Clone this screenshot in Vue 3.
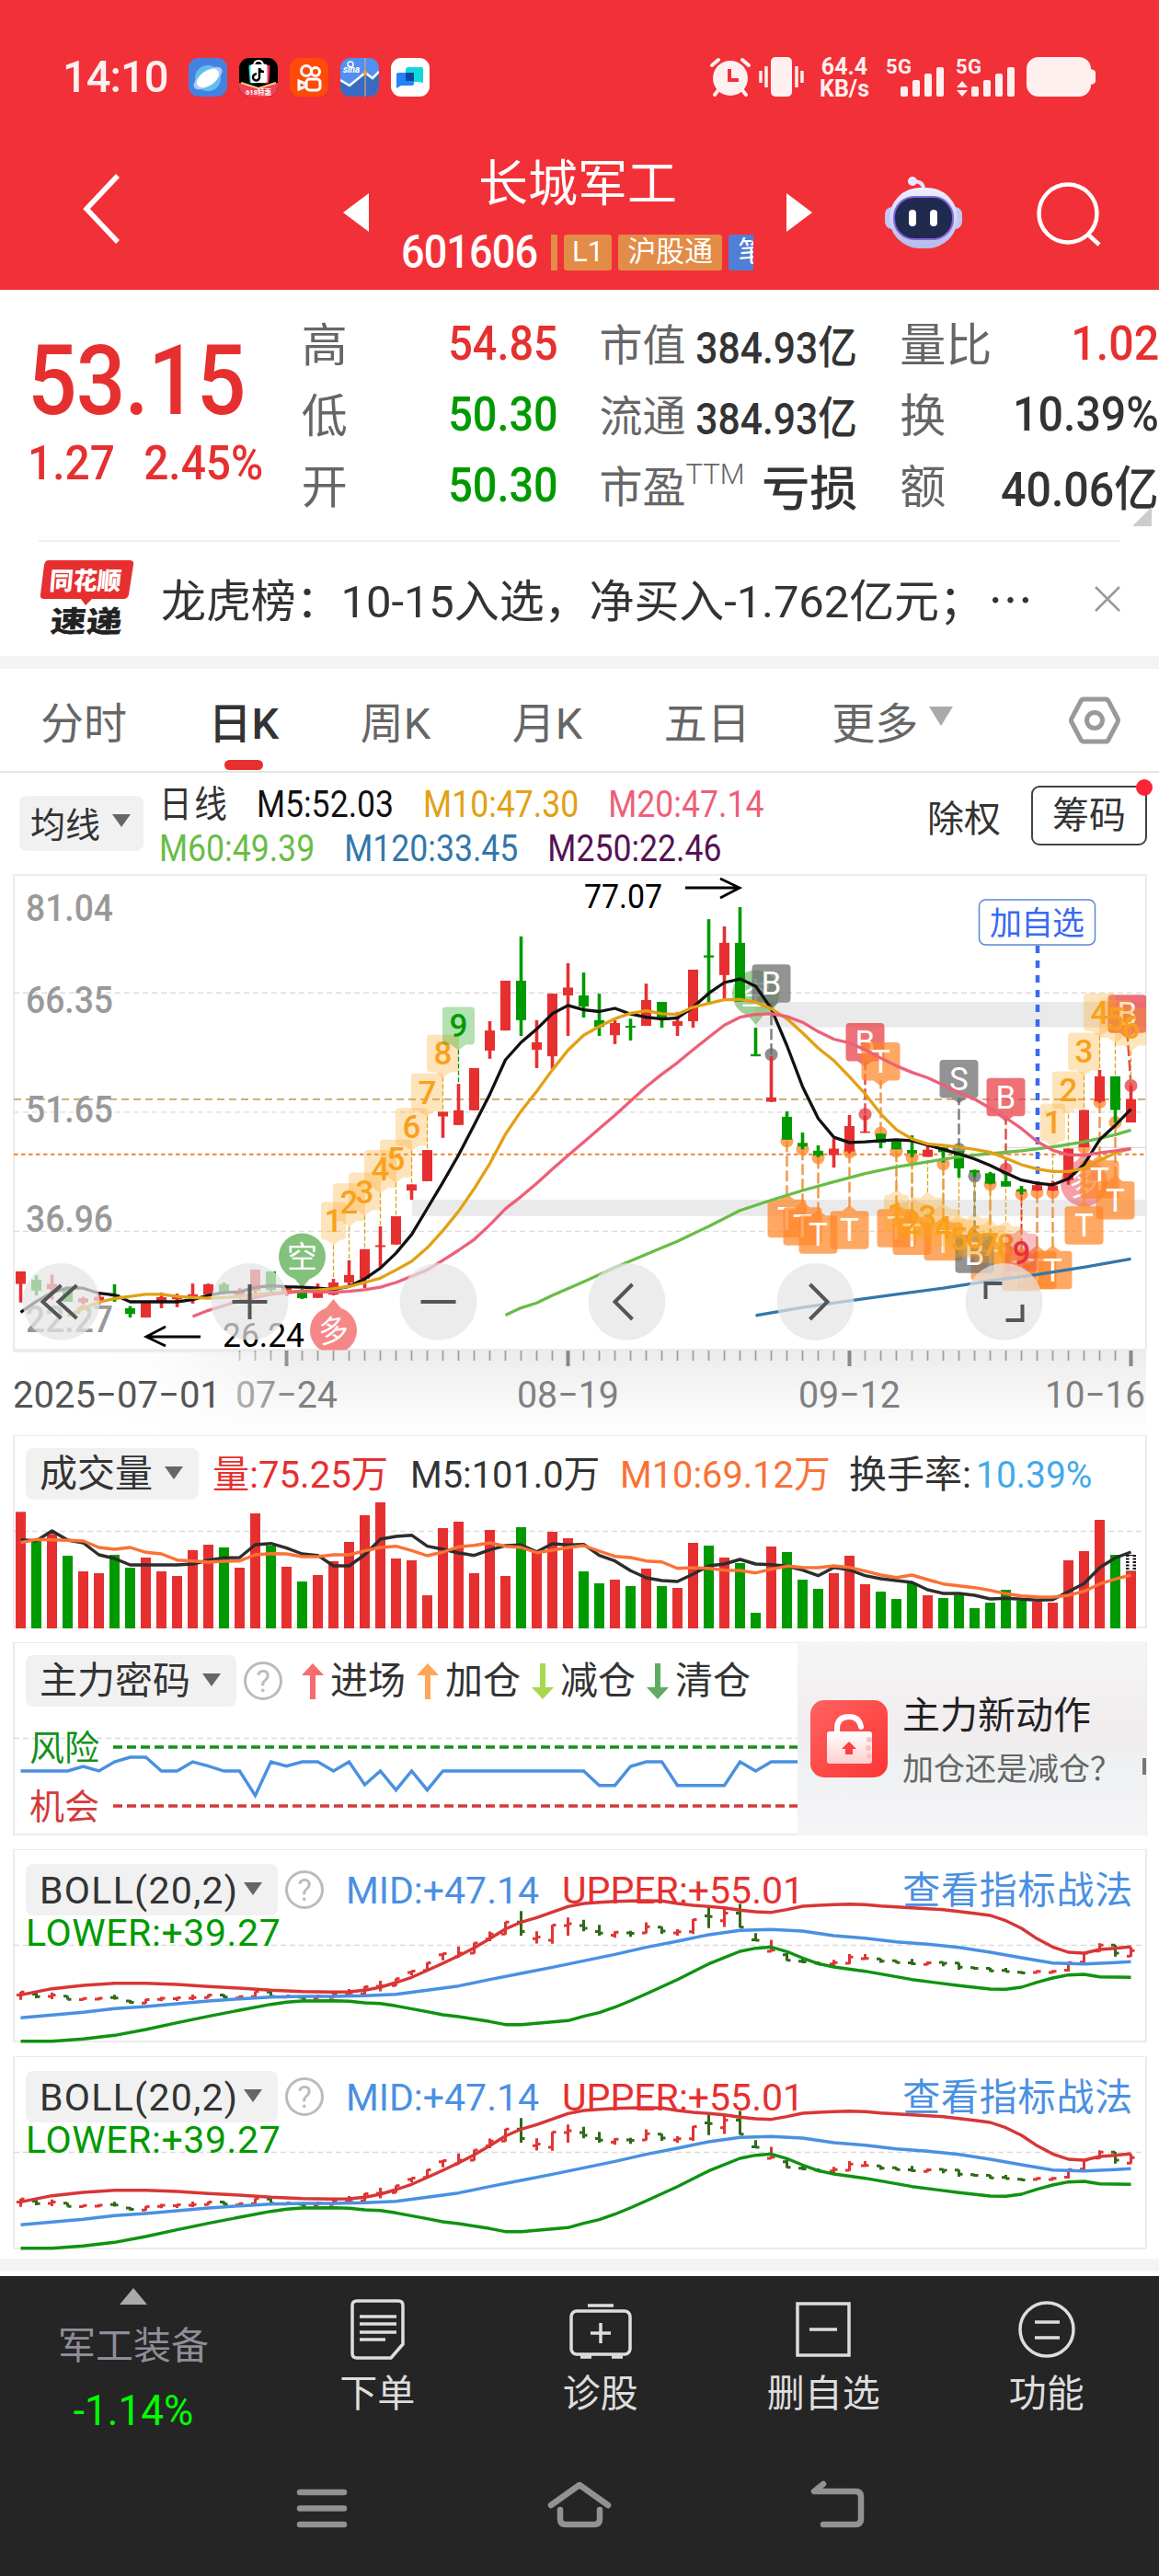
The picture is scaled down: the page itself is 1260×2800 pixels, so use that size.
<template>
  <main class="app">
    <header class="header">
      <div class="status">
        <span class="time">14:10</span>
        <div class="apps">
          <svg viewBox="0 0 42 42"><rect width="42" height="42" rx="11" fill="#4482e2"/><circle cx="21" cy="22" r="14" fill="#60c0ec"/><ellipse cx="21" cy="22" rx="18" ry="8" fill="#a8cdf5" transform="rotate(-35 21 22)"/><ellipse cx="21" cy="22" rx="13.500" ry="8" fill="#fff" transform="rotate(-35 21 22)"/></svg>
          <svg viewBox="0 0 42 42"><rect width="42" height="42" rx="11" fill="#000"/><path d="M0 27L21 33L42 27V31A11 11 0 0 1 31 42H11A11 11 0 0 1 0 31Z" fill="#ef4358"/><path d="M2 27L21 33L40 27" stroke="#f5cf76" stroke-width="2" fill="none"/><rect x="11" y="7" width="20" height="20" rx="2" fill="#25f0ea" transform="rotate(-4 21 17)"/><rect x="13" y="7" width="20" height="20" rx="2" fill="#fb3358" transform="rotate(4 21 17)"/><rect x="12.500" y="7" width="18" height="20" rx="2" fill="#fff"/><path d="M16 9q0-6 5-6t5 6" stroke="#fff" stroke-width="2" fill="none"/><path d="M22 11v10a3.500 3.500 0 1 1-3-3.500M22 11q1 4 5 4" stroke="#000" stroke-width="2.500" fill="none"/><text x="21" y="40" font-size="7.500" font-weight="700" fill="#fff" text-anchor="middle">618特惠</text></svg>
          <svg viewBox="0 0 42 42"><rect width="42" height="42" rx="11" fill="#ff4b08"/><g fill="none" stroke="#fff" stroke-width="3"><circle cx="18" cy="14" r="5.500"/><circle cx="28" cy="15" r="4.500"/><rect x="18" y="23" width="15" height="12" rx="3.500"/><path d="M17 28l-7-3v9l7-3"/></g></svg>
          <svg viewBox="0 0 42 42"><rect width="42" height="42" rx="11" fill="#5190f2"/><path d="M0 24L10 30L27 16L35 22L42 15V31A11 11 0 0 1 31 42H11A11 11 0 0 1 0 31Z" fill="#396cc0"/><path d="M0 24L10 30L27 16L35 22L42 15" stroke="#fff" stroke-width="2.500" fill="none"/><path d="M27 0V42" stroke="#d9a766" stroke-width="1.200"/><circle cx="27" cy="16" r="2.200" fill="#f0a030"/><circle cx="11" cy="7" r="3" fill="none" stroke="#fff" stroke-width="1.500"/><text x="3" y="16" font-size="10" fill="#fff" font-style="italic" font-weight="700">sina</text></svg>
          <svg viewBox="0 0 42 42"><rect width="42" height="42" rx="11" fill="#fff"/><path d="M19 10H33Q35 10 35 12V27L31 26H16V13Q16 10 19 10Z" fill="#12d8dc"/><path d="M8 16H25V28Q25 30 23 30H11L6 33V18Q6 16 8 16Z" fill="#2384fa"/><path d="M16 16H25V25H16Z" fill="#0b479f"/></svg>
        </div>
        <svg class="alarm" width="44" height="43" viewBox="0 0 44 43"><circle cx="22" cy="23" r="19" fill="#fff0f0"/><g stroke="#fff0f0" stroke-width="4" stroke-linecap="round"><path d="M2 9L9 3M42 9L35 3M9 36L5 41M35 36L39 41"/></g><path d="M21 13V25H31" stroke="#f23037" stroke-width="4" fill="none"/></svg>
        <svg class="vibrate" width="50" height="43" viewBox="0 0 50 43"><rect x="13" y="0" width="23" height="43" rx="5" fill="#fff0f0"/><path d="M8 10V33M2 15V28M41 10V33M47 15V28" stroke="#fff0f0" stroke-width="3.500"/></svg>
        <div class="speed"><span>64.4</span><span>KB/s</span></div>
        <svg class="signals" width="144" height="43" viewBox="0 0 144 43" fill="#fff0f0">
          <text x="0" y="18" class="net" textLength="28">5G</text><text x="76" y="18" class="net" textLength="28">5G</text>
          <rect v-for="n in 4" :key="n" :x="3 + n * 13" :y="39 - n * 7" width="8" :height="4 + n * 7" rx="2"/>
          <rect v-for="n in 4" :key="'b' + n" :x="80 + n * 13" :y="39 - n * 7" width="8" :height="4 + n * 7" rx="2"/>
          <path d="M77 33L83 26L89 33ZM77 36L83 43L89 36Z"/>
        </svg>
        <svg class="battery" width="76" height="43" viewBox="0 0 76 43" fill="#fff0f0"><rect width="70" height="43" rx="13"/><path d="M70 13Q75 14 75 17V26Q75 29 70 30Z"/></svg>
      </div>
      <div class="nav">
        <svg class="back" width="48" height="80" viewBox="0 0 48 80"><path d="M40 4L6 40L40 76" fill="none" stroke="#fff" stroke-width="5.500"/></svg>
        <svg class="prev" width="28" height="42" viewBox="0 0 28 42"><path d="M28 0V42L0 21Z" fill="#fff"/></svg>
        <div class="stock">
          <h1>长城军工</h1>
          <div class="code-row"><span class="code">601606</span><div class="tags"><i></i><b>L1</b><b>沪股通</b><b class="blue">笔</b></div></div>
        </div>
        <svg class="next" width="28" height="42" viewBox="0 0 28 42"><path d="M0 0V42L28 21Z" fill="#fff"/></svg>
        <svg class="robot" width="86" height="80" viewBox="0 0 86 80">
          <defs><linearGradient id="shell" x2="0" y2="1"><stop stop-color="#eef0ff"/><stop offset="1" stop-color="#b5bbec"/></linearGradient></defs>
          <path d="M43 14Q43 5 32 5" stroke="#dfe2fb" stroke-width="4" fill="none"/><circle cx="31" cy="5" r="5" fill="#e8e9ff"/>
          <rect x="1" y="33" width="84" height="24" rx="8" fill="#c3c7f2"/><rect x="6" y="12" width="74" height="66" rx="33" fill="url(#shell)"/>
          <rect x="11" y="22" width="64" height="46" rx="22" fill="#202a4e" stroke="#8264dd" stroke-width="2"/>
          <rect x="27" y="36" width="8" height="18" rx="4" fill="#fff"/><rect x="50" y="36" width="8" height="18" rx="4" fill="#fff"/>
        </svg>
        <svg class="search" width="74" height="74" viewBox="0 0 74 74" fill="none" stroke="#fff" stroke-width="4.500"><circle cx="36" cy="36" r="31.500"/><path d="M57 58L70 70"/></svg>
      </div>
    </header>

    <section class="quote">
      <div class="price"><strong>53.15</strong><div class="change"><span>1.27</span><span>2.45%</span></div></div>
      <dl v-for="(col, i) in quotes" :key="i" :class="'col col' + i">
        <div v-for="q in col" :key="q.label"><dt>{{ q.label }}<sup v-if="q.sup">{{ q.sup }}</sup></dt><dd :class="q.tone">{{ q.value }}</dd></div>
      </dl>
      <i class="corner"></i>
    </section>

    <section class="notice">
      <svg width="104" height="86" viewBox="0 0 104 86">
        <path d="M10 1H98Q103 1 102 6L97 38Q96 43 91 43H57L50 50L45 43H5Q0 43 1 38L5 6Q6 1 10 1Z" fill="#e72f30"/>
        <text x="13" y="33" class="logo" fill="#fff" textLength="78" lengthAdjust="spacingAndGlyphs" transform="skewX(-5)">同花顺</text>
        <text x="18" y="79" class="logo big" fill="#222" textLength="78" lengthAdjust="spacingAndGlyphs" transform="skewX(-5)">速递</text>
      </svg>
      <p>龙虎榜：10-15入选，净买入-1.762亿元；<span>…</span></p>
      <svg width="28" height="28" viewBox="0 0 28 28"><path d="M1 1L27 27M27 1L1 27" stroke="#999" stroke-width="2.500"/></svg>
    </section>

    <nav class="tabs">
      <a v-for="t in tabs" :key="t" :class="{ active: t === '日K' }">{{ t }}<i v-if="t === '更多'"></i></a>
      <svg width="58" height="54" viewBox="0 0 58 54" fill="none" stroke="#999" stroke-width="5"><path d="M17 4H41Q43 4 44 6L54 25Q55 27 54 29L44 48Q43 50 41 50H17Q15 50 14 48L4 29Q3 27 4 25L14 6Q15 4 17 4Z"/><circle cx="29" cy="27" r="8.500"/></svg>
    </nav>

    <section class="ma">
      <button class="select ma-select">均线<i></i></button>
      <div class="ma-list">
        <p><span class="c-dark day">日线</span><span class="c-black">M5:52.03</span><span class="c-orange">M10:47.30</span><span class="c-pink">M20:47.14</span></p>
        <p><span class="c-green">M60:49.39</span><span class="c-blue">M120:33.45</span><span class="c-purple">M250:22.46</span></p>
      </div>
      <span class="exright">除权</span>
      <button class="chips">筹码</button>
    </section>

    <!-- daily candles -->
    <svg class="kline" width="1260" height="620" viewBox="0 0 1260 620">
      <defs>
        <linearGradient id="axis" x2="0" y2="1"><stop stop-color="#ececec"/><stop offset="1" stop-color="#fff"/></linearGradient>
        <linearGradient id="fade"><stop stop-color="#fff"/><stop offset=".5" stop-color="#fff" stop-opacity=".9"/><stop offset="1" stop-color="#fff" stop-opacity="0"/></linearGradient>
        <clipPath id="plot"><rect x="15" y="11" width="1231" height="516.500"/></clipPath>
      </defs>
      <rect x="15" y="528" width="1231" height="92" fill="url(#axis)"/>
      <rect x="15" y="11" width="1231" height="516" fill="#fff" stroke="#ebebeb" stroke-width="2"/>
      <rect :x="821" :y="sy(383)" width="425" :height="sy(71)" fill="#eaeaea"/>
      <rect :x="448" :y="sy(936)" width="798" :height="sy(45)" fill="#eaeaea"/>
      <g stroke="#dcdcdc" stroke-width="1.300" stroke-dasharray="6 4"><path v-for="y in [358, 691, 1024]" :key="y" :d="`M15 ${sy(y)}H1246`"/></g>
      <path :d="`M1090 ${sy(790)}H1246`" stroke="#dcdcdc" stroke-width="1.300"/>
      <path :d="`M15 ${sy(655)}H1246`" stroke="#c7a467" stroke-width="1.800" stroke-dasharray="8 5"/>
      <path :d="`M15 ${sy(809)}H1246`" stroke="#f08330" stroke-width="2" stroke-dasharray="4.500 3.500"/>
      <g class="scale"><text v-for="p in prices" :key="p[0]" x="28" :y="p[1]" textLength="95" lengthAdjust="spacingAndGlyphs">{{ p[0] }}</text></g>

      <g clip-path="url(#plot)">
        <g v-for="b in bubbles" :key="b.x" :opacity="b.o">
          <circle :cx="b.x" :cy="b.y" r="25.500" :fill="b.fill"/>
          <path :d="b.up ? `M${b.x - 9} ${b.y - 23}L${b.x} ${b.y - 34}L${b.x + 9} ${b.y - 23}Z` : `M${b.x - 9} ${b.y + 23}L${b.x} ${b.y + 34}L${b.x + 9} ${b.y + 23}Z`" :fill="b.fill"/>
          <text :x="b.x" :y="b.y + 12" class="bubble" :transform="`rotate(${b.up ? -8 : 0} ${b.x} ${b.y})`">{{ b.t }}</text>
        </g>
        <path d="M1128 88V352" stroke="#3a6af0" stroke-width="4.500" stroke-dasharray="8 8"/>
        <g v-for="(m, i) in marks" :key="i">
          <path :d="`M${cx(m.i)} ${sy(m.dot)}L${cx(m.i) + m.shift} ${sy(m.up ? m.top : m.top + 106)}`" :stroke="m.line" stroke-width="2.500" stroke-dasharray="12 4"/>
          <circle :cx="cx(m.i)" :cy="sy(m.dot)" r="7" :fill="m.fill" opacity=".75"/>
        </g>
        <g v-for="(c, i) in candles" :key="i" :fill="c[0] === 'r' ? '#e63030' : '#009a00'">
          <rect :x="cx(i) - 1.800" :y="sy(c[3])" width="3.600" :height="sy(c[4] - c[3])"/>
          <rect :x="cx(i) - 5.500" :y="sy(c[1])" width="11" :height="sy(c[2] - c[1])"/>
        </g>
        <g v-for="(m, i) in marks" :key="'m' + i">
          <path :d="tag(cx(m.i) + m.shift, sy(m.top), 42, 41.500, m.up)" :fill="m.fill" opacity=".72"/>
          <text :x="cx(m.i) + m.shift" :y="sy(m.top) + 33" class="letter">{{ m.t }}</text>
        </g>
        <g v-for="(n, i) in counts" :key="'n' + i">
          <path :d="`M${cx(n[1])} ${sy(n[2] + (n[4] ? -15 : 120))}V${sy(n[3])}`" :stroke="n[5] || '#d9a520'" stroke-width="1.300" stroke-dasharray="5 2.500"/>
          <path :d="tag(cx(n[1]), sy(n[2]), n[0] === 1 ? 27 : 35, 41, n[4])" :fill="n[5] || '#fba51d'" opacity=".3"/>
          <text :x="cx(n[1])" :y="sy(n[2]) + 33" class="count" :fill="n[5] || '#f9a01b'">{{ n[0] }}</text>
        </g>
        <g fill="none" stroke-width="3.300" stroke-linejoin="round">
          <polyline v-for="l in maLines" :key="l.color" :points="line(l.pts, 2.5705)" :stroke="l.color"/>
        </g>
      </g>
      <rect x="1064.500" y="38" width="126" height="49" rx="7" fill="#fff" stroke="#5a86d8" stroke-width="1.500"/>
      <text x="1076" y="76" class="watch" textLength="103">加自选</text>
      <text x="635" y="47" class="peak" textLength="85" lengthAdjust="spacingAndGlyphs">77.07</text>
      <text x="242" y="524" class="peak" textLength="89" lengthAdjust="spacingAndGlyphs">26.24</text>
      <g stroke="#000" stroke-width="2.800" fill="none"><path d="M745 25H804M783 15L804 25L783 36"/><path d="M218 513H159M180 502L159 513L180 523"/></g>

      <g v-for="b in controls" :key="b.x">
        <circle :cx="b.x" cy="475" r="42" fill="#e4e4e4" opacity=".72"/>
        <path :d="b.d" :transform="`translate(${b.x} 475)`" fill="none" stroke="#555" stroke-width="4"/>
      </g>

      <g stroke="#a0a0a0" stroke-width="1.800"><path v-for="n in 58" :key="n" :d="`M${cx(n + 13)} 528V539`"/></g>
      <path d="M311.500 528V545M617.500 528V545M923.500 528V545M1229.500 528V545" stroke="#888" stroke-width="4"/>
      <text x="256" y="590" class="date" textLength="111" lengthAdjust="spacingAndGlyphs">07−24</text>
      <text x="562" y="590" class="date" textLength="111" lengthAdjust="spacingAndGlyphs">08−19</text>
      <text x="868" y="590" class="date" textLength="111" lengthAdjust="spacingAndGlyphs">09−12</text>
      <text x="1136" y="590" class="date" textLength="109" lengthAdjust="spacingAndGlyphs">10−16</text>
      <rect x="0" y="530" width="330" height="88" fill="url(#fade)"/>
      <text x="14" y="590" class="date first" textLength="226" lengthAdjust="spacingAndGlyphs">2025−07−01</text>
    </svg>

    <section class="panel">
      <svg width="1260" height="225" viewBox="0 0 1260 225">
        <rect x="15" y="0" width="1231" height="209" class="frame"/>
        <path d="M15 104.500H1246" class="grid"/>
        <rect v-for="(v, i) in volumes" :key="i" :x="cx(i) - 5.500" :y="v / 3 - 10" width="11" :height="(660 - v) / 3" :fill="candles[i][0] === 'r' ? '#e63030' : '#009a00'"/>
        <g fill="none" stroke-width="3.400" stroke-linejoin="round"><polyline :points="line(volMa5, 3, 10)" stroke="#2d2d2d"/><polyline :points="line(volMa10, 3, 10)" stroke="#fb7136"/></g>
        <path d="M1229.500 130V148" stroke="#111" stroke-width="11" stroke-dasharray="2 1.500"/><path d="M1229.500 131V147" stroke="#fff" stroke-width="4"/>
      </svg>
      <div class="legend vol">
        <button class="select">成交量<i></i></button>
        <span class="c-red v1">量:75.25万</span><span class="c-dark v2">M5:101.0万</span><span class="c-coral v3">M10:69.12万</span><span class="c-dark v4">换手率:</span><span class="c-sky v5">10.39%</span>
      </div>
    </section>

    <section class="panel">
      <svg width="1260" height="225" viewBox="0 0 1260 225">
        <rect x="15" y="0" width="1231" height="209" class="frame"/>
        <path d="M15 104.500H867" class="grid"/>
        <path d="M123 114H867" stroke="#12911a" stroke-width="3.500" stroke-dasharray="10 5"/>
        <path d="M123 178H867" stroke="#d43a3a" stroke-width="3.500" stroke-dasharray="10 5"/>
        <polyline :points="line(force, 3, 235)" fill="none" stroke="#4a90e0" stroke-width="3.400"/>
        <text x="32" y="128" class="zone" fill="#12911a" textLength="76">风险</text>
        <text x="32" y="192" class="zone" fill="#d43a3a" textLength="76">机会</text>
      </svg>
      <div class="legend">
        <button class="select">主力密码<i></i></button><em class="help">?</em>
        <span v-for="a in actions" :key="a.t" class="action"><svg width="24" height="39" viewBox="0 0 24 39" :fill="a.color"><path :d="a.up ? 'M12 0L24 13H15V39H9V13H0Z' : 'M12 39L24 26H15V0H9V26H0Z'"/></svg>{{ a.t }}</span>
      </div>
      <aside class="promo">
        <svg width="84" height="84" viewBox="0 0 84 84">
          <defs><linearGradient id="lock" x2="1" y2="1"><stop stop-color="#ff6262"/><stop offset="1" stop-color="#fb3532"/></linearGradient><linearGradient id="body" x2="0" y2="1"><stop stop-color="#fff"/><stop offset="1" stop-color="#ffcfcf"/></linearGradient></defs>
          <rect width="84" height="84" rx="15" fill="url(#lock)"/>
          <path d="M29 36V31Q29 18 42 18Q53 18 55 29" fill="none" stroke="#fff" stroke-width="6" stroke-linecap="round"/>
          <rect x="18" y="34" width="49" height="35" rx="3" fill="url(#body)"/>
          <g fill="#ffc0c0"><circle cx="64" cy="43" r="3"/><circle cx="63" cy="52" r="3"/><circle cx="64" cy="61" r="3"/></g>
          <path d="M42 45L50 53H46V59H38V53H34Z" fill="#fb4040"/>
        </svg>
        <div><b>主力新动作</b><p>加仓还是减仓？</p></div>
        <i></i>
      </aside>
    </section>

    <section v-for="k in 2" :key="k" class="panel">
      <svg width="1260" height="225" viewBox="0 0 1260 225">
        <rect x="15" y="0" width="1231" height="209" class="frame"/>
        <path d="M15 104.500H1246" class="grid"/>
        <path v-for="(c, i) in candles" :key="i" :d="ohlc(c, i)" fill="none" :stroke="c[0] === 'r' ? '#e03535' : '#2f6a17'" stroke-width="3"/>
        <g fill="none" stroke-width="3.400" stroke-linejoin="round"><polyline :points="line(boll.upper, 3, 10)" stroke="#d83636"/><polyline :points="line(boll.mid, 3, 10)" stroke="#4a90e2"/><polyline :points="line(boll.lower, 3, 10)" stroke="#0f9212"/></g>
      </svg>
      <div class="legend boll">
        <button class="select"><span>BOLL(20,2)</span><i></i></button><em class="help">?</em>
        <span class="mid">MID:+47.14</span><span class="c-red upper">UPPER:+55.01</span><a>查看指标战法</a>
        <span class="lower">LOWER:+39.27</span>
      </div>
    </section>

    <footer class="footer">
      <div class="bar">
        <div class="sector"><i></i><span>军工装备</span><b>-1.14%</b></div>
        <div class="item"><svg width="68" height="68" viewBox="0 0 68 68"><path d="M12 3H57Q62 3 62 8V50L49 65H12Q7 65 7 60V8Q7 3 12 3Z"/><path d="M15 20H55M15 28H55M15 37H55M15 45H43"/></svg>下单</div>
        <div class="item"><svg width="68" height="68" viewBox="0 0 68 68"><rect x="2" y="14" width="64" height="47" rx="6"/><path d="M20 8H48M34 27V49M23 38H45M12 64H24M46 64H58"/></svg>诊股</div>
        <div class="item"><svg width="68" height="68" viewBox="0 0 68 68"><rect x="6" y="6" width="56" height="56"/><path d="M19 34H49"/></svg>删自选</div>
        <div class="item"><svg width="68" height="68" viewBox="0 0 68 68"><circle cx="34" cy="34" r="29"/><path d="M21 26H48M21 43H48"/></svg>功能</div>
      </div>
      <div class="system">
        <svg width="70" height="56" viewBox="0 0 70 56"><path d="M11 13H59M11 30.500H59M11 48H59"/></svg>
        <svg width="70" height="56" viewBox="0 0 70 56"><path d="M4 27L35 5L66 27M14 32V42Q14 48 20 48H51Q57 48 57 42V32"/></svg>
        <svg width="70" height="56" viewBox="0 0 70 56"><path d="M20 4L10 12H55Q61 12 61 18V42Q61 48 55 48H20"/></svg>
      </div>
    </footer>
  </main>
</template>

<script setup>
const quotes = [
  [
    { label: '高', value: '54.85', tone: 'up' },
    { label: '低', value: '50.30', tone: 'down' },
    { label: '开', value: '50.30', tone: 'down' }
  ],
  [
    { label: '市值', value: '384.93亿' },
    { label: '流通', value: '384.93亿' },
    { label: '市盈', sup: 'TTM', value: '亏损', tone: 'wide' }
  ],
  [
    { label: '量比', value: '1.02', tone: 'up' },
    { label: '换', value: '10.39%' },
    { label: '额', value: '40.06亿' }
  ]
];

const tabs = ['分时', '日K', '周K', '月K', '五日', '更多'];

const actions = [
  { t: '进场', color: '#f76c6c', up: true },
  { t: '加仓', color: '#ffa657', up: true },
  { t: '减仓', color: '#a9d84f', up: false },
  { t: '清仓', color: '#5fab62', up: false }
];

const prices = [['81.04', 61], ['66.35', 160.5], ['51.65', 280], ['36.96', 399], ['22.27', 508]];

// one slot per trading day
const cx = i => 22.5 + 17 * i;
const sy = v => v / 2.5705;
const line = (pts, k, off = 0) => pts.map(([i, y]) => `${cx(i)},${(y / k - off).toFixed(1)}`).join(' ');
const seq = (start, values) => values.map((v, i) => [start + i, v]);

// color, body top, body bottom, wick top, wick bottom
const candles = `r 1136 1171 1136 1223|g 1159 1190 1147 1203|r 1171 1186 1145 1215|g 1184 1221 1184 1221|r 1211 1223 1207 1229|r 1207 1218 1200 1229|g 1200 1206 1172 1221|g 1239 1255 1233 1265|r 1224 1265 1224 1265|r 1208 1221 1195 1239|r 1203 1214 1198 1236|r 1200 1208 1170 1226
r 1172 1201 1170 1201|g 1172 1195 1167 1200|r 1190 1205 1182 1212|r 1131 1190 1131 1205|g 1136 1188 1136 1200|r 1180 1195 1180 1205|g 1195 1211 1185 1213|r 1182 1210 1170 1210|r 1167 1201 1157 1203|r 1146 1167 1105 1180|r 1074 1157 1074 1183|r 1063 1068 1010 1123
r 982 1061 982 1061|r 893 910 893 936|r 797 884 797 884|r 690 703 690 763|r 686 727 612 727|r 568 686 568 686|r 463 519 437 542|r 324 463 324 463|g 324 434 200 478|r 496 517 434 568|r 360 535 360 570|r 343 365 275 478
g 365 396 301 427|g 434 453 360 478|r 442 476 434 501|g 450 455 430 491|r 378 450 332 450|g 383 428 383 455|r 437 450 412 478|r 293 437 293 455|g 253 259 152 390|r 218 308 172 375|g 218 383 118 383|g 529 535 455 535
r 650 662 535 663|g 704 768 689 768|g 777 787 748 795|g 799 812 784 817|r 793 811 765 846|r 730 801 699 806|r 745 749 700 749|g 751 777 751 792|g 772 795 772 795|g 797 806 756 817|r 796 816 785 816|g 790 803 790 832
g 800 848 800 874|g 853 860 852 872|g 862 891 858 893|g 884 899 858 899|g 907 913 897 922|r 895 910 885 912|r 896 910 883 912|r 793 881 793 894|r 685 789 685 789|r 591 661 573 665|g 591 685 591 720|r 655 720 617 720`
  .split(/[|\n]/)
  .map(s => s.split(' ').map((v, i) => (i ? +v : v)));

const maLines = [
  { color: '#68bd45', pts: [[31, 1258], [32, 1238], [33, 1224], [34, 1203], [36, 1165], [38, 1125], [41, 1070], [42, 1052], [44, 1010], [46, 966], [48, 937], [50, 910], [52, 886], [54, 863], [56, 844], [58, 830], [60, 816], [62, 807], [64, 799], [66, 788], [68, 774], [70, 754], [71, 741]] },
  { color: '#3377aa', pts: [[47, 1259], [50, 1237], [53, 1218], [56, 1200], [59, 1183], [62, 1162], [65, 1145], [68, 1124], [71, 1101]] },
  { color: '#111', pts: seq(0, [1250, 1220, 1195, 1182, 1183, 1197, 1202, 1221, 1221, 1221, 1221, 1215, 1203, 1195, 1193, 1181, 1176, 1179, 1180, 1183, 1186, 1178, 1157, 1127, 1085, 1033, 960, 887, 811, 727, 641, 545, 496, 459, 416, 393, 405, 410, 401, 417, 426, 431, 428, 398, 359, 329, 319, 339, 402, 505, 620, 709, 761, 776, 774, 771, 768, 771, 783, 795, 808, 822, 840, 861, 881, 890, 894, 877, 837, 768, 728, 683]) },
  { color: '#e2a013', pts: seq(3, [1260, 1240, 1222, 1212, 1206, 1200, 1200, 1206, 1209, 1211, 1209, 1206, 1200, 1196, 1193, 1191, 1188, 1184, 1178, 1167, 1155, 1132, 1108, 1070, 1022, 968, 905, 835, 753, 688, 633, 573, 518, 476, 452, 430, 415, 408, 416, 418, 398, 387, 377, 376, 384, 402, 430, 470, 512, 547, 592, 640, 696, 740, 766, 780, 784, 789, 795, 803, 820, 838, 850, 857, 857, 848, 826, 805, 793]) },
  { color: '#ee5f78', pts: [[11, 1262], [12, 1245], [14, 1218], [16, 1200], [18, 1192], ...seq(20, [1194, 1192, 1187, 1180, 1167, 1150, 1132, 1105, 1077, 1047, 1006, 961, 927, 890, 850, 812, 775, 737, 700, 660, 620, 585, 553, 517, 482, 448, 426, 418, 416, 424, 440, 466, 487, 498, 517, 540, 562, 580, 595, 615, 637, 655, 680, 707, 737, 773, 798, 810, 811, 805, 799, 793])] }
];

const kinds = {
  T: { t: 'T', fill: '#ff8628', line: '#ee9a50' },
  B: { t: 'B', fill: '#e63a40', line: '#e05050' },
  GB: { t: 'B', fill: '#6a6a6a', line: '#808080' },
  GS: { t: 'S', fill: '#6a6a6a', line: '#808080' }
};
// kind, day, dot, box top, pointer upwards
const marks = [
  ['GB', 48, 530, 278], ['B', 54, 697, 442], ['T', 55, 749, 496], ['GS', 60, 795, 545], ['B', 63, 850, 596],
  ['T', 49, 772, 935, 1], ['T', 50, 795, 957, 1], ['T', 51, 819, 980, 1], ['T', 53, 803, 967, 1], ['T', 56, 800, 962, 1],
  ['T', 57, 818, 983, 1], ['T', 59, 836, 999, 1], ['T', 62, 893, 1055, 1], ['GB', 61, 870, 1034, 1], ['T', 64, 920, 1085, 1],
  ['T', 65, 915, 1079, 1], ['T', 66, 915, 1079, 1], ['T', 69, 663, 826, 1], ['T', 68, 789, 954, 1], ['T', 70, 720, 884, 1],
  ['B', 71, 617, 363, 0, -4]
].map(([k, i, dot, top, up, shift = 0]) => ({ ...kinds[k], i, dot, top, up, shift }));

// number, day, box top, end of the dashed lead, pointer upwards, color
const counts = [
  [1, 20, 942, 1157], [2, 21, 890, 1105], [3, 22, 860, 1074], [4, 23, 797, 1010], [5, 24, 768, 982],
  [6, 25, 679, 893], [7, 26, 583, 797], [8, 27, 474, 690], [9, 28, 397, 612, 0, '#009a00'],
  [1, 56, 922, 800, 1], [2, 57, 945, 818, 1], [3, 58, 930, 820, 1], [4, 59, 962, 836, 1], [5, 60, 992, 874, 1],
  [6, 61, 988, 880, 1], [7, 62, 1007, 895, 1], [8, 63, 1010, 900, 1], [9, 64, 1031, 920, 1, '#e63040'],
  [1, 66, 667, 883], [2, 67, 577, 793], [3, 68, 469, 685], [4, 69, 359, 573], [5, 70, 377, 591], [6, 71, 400, 617]
];

const bubbles = [
  { t: '空', x: 328.5, y: 426, fill: '#76bb6e', o: 0.9 },
  { t: '多', x: 362.5, y: 506, fill: '#f57b7b', o: 0.9, up: true },
  { t: '空', x: 821.5, y: 140, fill: '#76bb6e', o: 0.7 },
  { t: '多', x: 1178.5, y: 346, fill: '#f0606c', o: 0.6, up: true }
];

const controls = [
  { x: 66.5, d: 'M0 -18L-20 0L0 18M17 -18L-3 0L17 18' },
  { x: 271.5, d: 'M-19 0H19M0 -19V19' },
  { x: 476.5, d: 'M-19 0H19' },
  { x: 681.5, d: 'M6 -19L-13 0L6 19' },
  { x: 886.5, d: 'M-6 -19L13 0L-6 19' },
  { x: 1091.5, d: 'M-20 -3V-20H-2M20 3V20H2' }
];

const volumes = [280, 375, 352, 423, 474, 480, 420, 462, 429, 474, 489, 405, 387, 396, 462, 285, 390, 459, 507, 486, 441, 378, 291, 249, 432, 438, 552, 333, 312, 480, 339, 489, 330, 410, 345, 366, 474, 513, 501, 522, 465, 522, 528, 381, 390, 429, 447, 609, 393, 411, 501, 531, 480, 423, 516, 540, 564, 513, 552, 561, 550, 594, 576, 534, 570, 573, 576, 438, 408, 306, 420, 474];
const volMa5 = seq(0, [371, 374, 342, 372, 381, 420, 432, 453, 453, 453, 453, 450, 438, 430, 429, 387, 383, 398, 417, 422, 456, 456, 420, 369, 360, 356, 392, 402, 414, 422, 404, 390, 388, 410, 384, 388, 386, 422, 440, 472, 495, 504, 507, 483, 456, 450, 435, 450, 452, 457, 470, 488, 461, 469, 488, 498, 504, 510, 534, 546, 546, 552, 564, 562, 565, 568, 566, 540, 514, 462, 430, 411]);
const volMa10 = seq(0, [380, 370, 371, 373, 375, 396, 402, 396, 412, 417, 437, 440, 444, 441, 440, 420, 416, 417, 426, 426, 420, 420, 407, 396, 392, 406, 423, 411, 394, 389, 381, 392, 396, 413, 405, 396, 390, 408, 425, 429, 440, 443, 464, 462, 464, 470, 471, 479, 467, 457, 461, 462, 456, 461, 473, 486, 494, 486, 501, 515, 521, 527, 536, 547, 554, 557, 558, 552, 539, 515, 499, 486]);

const force = [[0, 1125], [3, 1125], [4, 1110], [5, 1125], [6, 1095], [7, 1080], [8, 1080], [9, 1125], [10, 1125], [11, 1095], [12, 1109], [13, 1125], [14, 1125], [15, 1205], [16, 1095], [17, 1109], [18, 1095], [19, 1095], [20, 1125], [21, 1095], [22, 1170], [23, 1125], [24, 1187], [25, 1125], [26, 1187], [27, 1125], [36, 1125], [37, 1172], [38, 1172], [39, 1110], [40, 1095], [41, 1095], [42, 1172], [45, 1172], [46, 1095], [47, 1125], [48, 1095], [49.7, 1095]];

const boll = {
  upper: [[0, 505], [2, 485], [4, 474], [6, 467], [8, 467], [10, 471], [12, 478], [14, 483], [16, 490], [18, 494], ...seq(20, [496, 495, 490, 480, 465, 448, 425, 402, 378, 352, 322, 290, 268, 253, 235, 217, 207, 203, 200, 199, 198, 199, 207, 213, 217, 221, 229, 234, 236, 227, 216, 213, 211, 209, 211, 215, 218, 221, 224, 227, 233, 239, 246, 263, 288, 322, 349, 366, 369, 357, 353, 348])],
  mid: [[0, 580], [2, 571], [4, 562], [6, 550], [8, 543], [10, 534], [12, 525], [14, 518], [16, 512], [18, 510], [20, 510], [22, 508], [24, 503], [26, 490], [28, 476], [30, 455], [32, 435], [34, 415], [36, 394], [38, 373], [40, 350], [42, 330], [44, 309], [46, 295], [48, 292], [50, 297], [52, 312], [54, 320], [56, 332], [58, 340], [60, 350], [62, 366], [64, 384], [66, 401], [68, 404], [70, 400], [71, 397]],
  lower: [[0, 656], [2, 656], [4, 649], [6, 637], [8, 618], [10, 596], [12, 575], [14, 555], [16, 536], [17, 529], [18, 525], [20, 524], [21, 526], [22, 531], [23, 533], [24, 541], [26, 560], [27, 570], [28, 576], [30, 592], [31, 602], [32, 602], [34, 593], [35, 589], [36, 575], [37, 563], [38, 545], [39, 524], [40, 502], [42, 455], [44, 404], [46, 363], [47, 353], [48, 349], [49, 364], [50, 385], [51, 403], [52, 414], [54, 428], [57, 455], [60, 475], [62, 486], [63, 487], [64, 480], [65, 464], [66, 450], [67, 440], [68, 438], [69, 446], [70, 447], [71, 448]]
};

// open tick on the left, close tick on the right
const ohlc = ([color, top, bottom, high, low], i) => {
  const y = v => ((210 + (v - 118) * 0.2807) / 3 - 10).toFixed(1);
  const x = cx(i);
  const [open, close] = color === 'r' ? [bottom, top] : [top, bottom];
  return `M${x - 4.5} ${y(open)}H${x}M${x} ${y(high - 4)}V${y(low + 4)}M${x} ${y(close)}H${x + 4}`;
};

// rounded label with a small pointer; y is the top of its box
const tag = (x, y, w, h, up) => {
  const l = x - w / 2;
  const r = x + w / 2;
  const b = y + h;
  const head = up ? `H${x - 8}L${x} ${y - 6}L${x + 8} ${y}` : '';
  const tail = up ? '' : `H${x + 8}L${x} ${b + 6}L${x - 8} ${b}`;
  return `M${l + 4} ${y}${head}H${r - 4}Q${r} ${y} ${r} ${y + 4}V${b - 4}Q${r} ${b} ${r - 4} ${b}${tail}H${l + 4}Q${l} ${b} ${l} ${b - 4}V${y + 4}Q${l} ${y} ${l + 4} ${y}Z`;
};
</script>

<style>
body {
  margin: 0;
  background: #fff;
}
</style>

<style scoped>
* {
  box-sizing: border-box;
}
.app {
  width: 1260px;
  height: 2800px;
  overflow: hidden;
  display: flex;
  flex-direction: column;
  background: #fff;
  color: #333;
  font-family: Roboto, 'Noto Sans CJK SC', sans-serif;
}
svg {
  display: block;
  flex: none;
}
p, h1, dl, dd {
  margin: 0;
}
button {
  border: none;
  padding: 0;
  font: inherit;
  color: inherit;
}
.header {
  height: 315px;
  flex: none;
  background: #f23037;
  color: #fff;
}
.status {
  height: 126px;
  padding: 41px 68px 0 68px;
  display: flex;
  align-items: center;
}
.time {
  width: 137px;
  font-size: 49px;
  font-weight: 500;
  letter-spacing: -1px;
  color: #fff0f0;
  transform: scaleX(.96);
  transform-origin: left;
}
.apps {
  display: flex;
  gap: 13px;
  flex: 1;
}
.apps svg {
  width: 42px;
  height: 42px;
}
.vibrate {
  margin-left: 9px;
}
.speed {
  width: 60px;
  margin: 2px 0 0 13px;
  display: flex;
  flex-direction: column;
  align-items: center;
  font-size: 25px;
  line-height: 24px;
  font-weight: 700;
  color: #fff0f0;
}
.signals {
  margin-left: 15px;
}
.net {
  font-size: 22px;
  font-weight: 700;
}
.battery {
  margin-left: 9px;
}
.nav {
  display: flex;
  align-items: center;
  height: 189px;
  padding: 16px 62px 0 88px;
}
.back {
  margin-top: -4px;
}
.prev {
  margin: 4px 35px 0 237px;
}
.stock {
  width: 386px;
  height: 173px;
  display: flex;
  flex-direction: column;
  align-items: center;
}
h1 {
  font-size: 54px;
  line-height: 60px;
  font-weight: 400;
  padding-top: 29px;
}
.code-row {
  width: 384px;
  display: flex;
  align-items: center;
  margin-top: 21px;
  height: 44px;
}
.code {
  width: 163px;
  font-size: 50px;
  font-weight: 500;
  letter-spacing: -1px;
  transform: scaleX(.9);
  transform-origin: left;
}
.tags {
  display: flex;
  gap: 7px;
  width: 220px;
  overflow: hidden;
}
.tags i {
  width: 7px;
  height: 39px;
  background: #e28c47;
  flex: none;
}
.tags b {
  flex: none;
  height: 39px;
  padding: 0 10px;
  border-radius: 3px;
  background: #e28c47;
  font-size: 31px;
  line-height: 38px;
  font-weight: 400;
}
.tags b:nth-of-type(1) {
  padding: 0 9px;
}
.tags .blue {
  background: #5080d5;
}
.next {
  margin: 4px 0 0 35px;
}
.robot {
  margin: 6px 78px 0 78px;
}
.search {
  margin-top: 8px;
}
.quote {
  position: relative;
  display: flex;
  height: 272px;
  padding-top: 20px;
}
.price {
  width: 328px;
  padding-left: 30px;
  color: #e63030;
  font-weight: 500;
}
.price strong {
  display: block;
  margin-top: 20px;
  font-size: 105px;
  line-height: 120px;
  font-weight: 500;
  letter-spacing: -1px;
  transform: scaleX(.9);
  transform-origin: left;
}
.change {
  display: flex;
  gap: 34px;
  font-size: 52px;
  line-height: 60px;
  margin-top: -1px;
  transform: scaleX(.92);
  transform-origin: left;
}
.col > div {
  display: flex;
  height: 77px;
  align-items: center;
  justify-content: space-between;
  font-size: 50px;
  white-space: nowrap;
}
.col dt {
  width: 0;
  margin-top: -5px;
  color: #666;
  display: flex;
}
.col dd {
  font-weight: 500;
  font-size: 52px;
  transform: scaleX(.9);
  transform-origin: right;
}
.col0 {
  width: 279px;
}
.col1 {
  width: 281px;
  margin-left: 45px;
}
.col1 > div dt {
  font-size: 47px;
}
.col1 > div dd {
  font-size: 49px;
  transform: scaleX(.87);
}
.col1 > div .wide {
  font-size: 52px;
  transform: none;
}
.col2 {
  width: 282px;
  margin-left: 46px;
}
.col2 > div dd {
  transform: scaleX(.93);
}
sup {
  font-size: 31px;
  line-height: 50px;
  font-weight: 300;
}
dd.up {
  color: #e63030;
}
dd.down {
  color: #009a00;
}
.corner {
  position: absolute;
  right: 8px;
  bottom: 15px;
  border-left: 21px solid transparent;
  border-bottom: 21px solid #ccc;
}
.notice {
  height: 126px;
  margin: 0 42px;
  border-top: 2px solid #efefef;
  display: flex;
  align-items: center;
}
.notice > svg:first-child {
  margin: 0 28px 0 1px;
}
.notice > svg:last-child {
  margin-left: auto;
}
.logo {
  font-size: 27px;
  font-weight: 900;
}
.logo.big {
  font-size: 32px;
}
.notice p {
  margin-top: 2px;
  font-size: 49px;
  line-height: 70px;
  letter-spacing: -.1px;
  white-space: nowrap;
}
.notice p span {
  padding-left: 4px;
  font-family: 'Noto Sans CJK SC', sans-serif;
}
.tabs {
  height: 127px;
  flex: none;
  border-top: 14px solid #f4f4f4;
  border-bottom: 2px solid #e6e6e6;
  padding: 0 41px 0 44px;
  display: flex;
  align-items: center;
  font-size: 47px;
  color: #666;
}
.tabs a {
  position: relative;
  display: flex;
  align-items: center;
  margin-right: 88.5px;
}
.tabs a.active {
  color: #333;
  font-weight: 500;
}
.tabs a.active::after {
  content: '';
  position: absolute;
  left: 17px;
  bottom: -20px;
  width: 42px;
  height: 11px;
  border-radius: 6px;
  background: #e63030;
}
.tabs a i {
  margin: 0 0 8px 12px;
  border: 13px solid transparent;
  border-top: 21px solid #aaa;
  border-bottom: 0;
}
.tabs a:nth-of-type(6) {
  margin-right: auto;
}
.ma {
  height: 100px;
  flex: none;
  display: flex;
  padding: 11px 13px 0 21px;
  font-size: 40px;
}
.select {
  height: 56px;
  flex: none;
  padding: 0 17px 0 15px;
  border-radius: 8px;
  background: #f1f1f1;
  display: flex;
  align-items: center;
  font-size: 41px;
  color: #333;
}
.select i {
  margin: 0 0 2px 13px;
  border: 10px solid transparent;
  border-top: 14px solid #666;
  border-bottom: 0;
}
.ma-select {
  width: 135px;
  height: 60px;
  margin-top: 14px;
  padding: 0 0 4px 12px;
  font-size: 38px;
}
.ma-list {
  width: 836px;
  padding-left: 17px;
}
.ma-list p {
  display: flex;
  gap: 36px;
  line-height: 48px;
  height: 48px;
  white-space: nowrap;
  transform: scaleX(.89);
  transform-origin: left;
}
.ma-list .day {
  letter-spacing: 3px;
  margin-right: -3px;
}
.exright {
  width: 110px;
  margin-top: 20px;
  line-height: 40px;
  padding-left: 16px;
}
.chips {
  position: relative;
  width: 126px;
  height: 65px;
  margin-top: 3px;
  margin-left: auto;
  border: 2px solid #444;
  border-radius: 9px;
  background: #fff;
  font-size: 40px;
  line-height: 61px;
  color: #333;
}
.chips::after {
  content: '';
  position: absolute;
  top: -9px;
  right: -8px;
  width: 18px;
  height: 18px;
  border-radius: 50%;
  background: #fb2434;
}
.c-dark { color: #333; }
.c-black { color: #111; }
.c-orange { color: #e2a013; }
.c-pink { color: #ee5f78; }
.c-green { color: #68bd45; }
.c-blue { color: #3377aa; }
.c-purple { color: #551155; }
.c-red { color: #e63030; }
.c-coral { color: #fb7136; }
.c-sky { color: #42aaea; }
.scale text {
  font-size: 40px;
  font-weight: 500;
  fill: #999;
}
.bubble {
  font-size: 33px;
  fill: #fff;
  text-anchor: middle;
}
.letter {
  font-size: 35px;
  fill: #fff;
  text-anchor: middle;
}
.count {
  font-size: 35px;
  font-weight: 500;
  text-anchor: middle;
}
.watch {
  font-size: 35px;
  fill: #3a6af0;
}
.peak {
  font-size: 37px;
  fill: #000;
}
.date {
  font-size: 41px;
  fill: #808080;
}
.date.first {
  fill: #555;
}
.panel {
  height: 225px;
  flex: none;
  display: grid;
}
.panel > * {
  grid-area: 1 / 1;
}
.frame {
  fill: #fff;
  stroke: #ebebeb;
  stroke-width: 2;
}
.grid {
  stroke: #dcdcdc;
  stroke-width: 1.300;
  stroke-dasharray: 6 4;
}
.legend {
  height: 70px;
  display: flex;
  align-items: center;
  padding: 14px 28px 0;
  font-size: 41px;
  line-height: 56px;
  white-space: nowrap;
}
.vol span {
  padding-top: 2px;
  transform-origin: left;
}
.v1 {
  width: 215px;
  margin-left: 15px;
  transform: scaleX(.98);
}
.v2 {
  width: 228px;
  transform: scaleX(.97);
}
.v3 {
  width: 249px;
  transform: scaleX(.97);
}
.v4 {
  width: 138px;
}
.v5 {
  transform: scaleX(.95);
}
.zone {
  font-size: 38px;
}
.help {
  width: 42px;
  height: 42px;
  flex: none;
  margin-left: 8px;
  border: 3px solid #bbb;
  border-radius: 50%;
  font-size: 33px;
  line-height: 37px;
  font-style: normal;
  text-align: center;
  color: #bbb;
}
.action {
  width: 125px;
  display: flex;
  align-items: center;
  gap: 7px;
}
.help + .action {
  margin-left: 21px;
}
.promo {
  width: 379px;
  height: 211px;
  margin: -1px 0 0 867px;
  padding-left: 14px;
  display: flex;
  align-items: center;
  gap: 16px;
  background: linear-gradient(#f5f5f6, #f1ecee 50%, #eef1f2 62%, #f5f4f7);
  overflow: hidden;
  white-space: nowrap;
}
.promo b {
  display: block;
  margin-top: 10px;
  font-size: 41px;
  line-height: 56px;
  font-weight: 400;
  color: #222;
}
.promo p {
  font-size: 34px;
  line-height: 60px;
  color: #666;
}
.promo i {
  width: 4px;
  height: 18px;
  margin: 60px 0 0 auto;
  background: #777;
}
.promo div {
  width: 245px;
}
.boll {
  height: 117px;
  flex-wrap: wrap;
  align-content: flex-start;
}
.boll .select span {
  padding-top: 3px;
  letter-spacing: 1.3px;
  width: 209px;
}
.boll .help {
  align-self: center;
}
.mid {
  width: 235px;
  margin-left: 24px;
  padding-top: 3px;
  color: #4a90e2;
}
.upper {
  padding-top: 3px;
}
.boll a {
  margin-left: auto;
  padding-top: 3px;
  letter-spacing: .8px;
  color: #4a90e2;
}
.lower {
  width: 100%;
  line-height: 37px;
  letter-spacing: .6px;
  color: #009a00;
}
.footer {
  height: 345px;
  margin-top: -5px;
  flex: none;
  background: linear-gradient(#f4f4f4 14px, #fff 14px 19px, #252525 19px);
  padding-top: 19px;
}
.bar {
  display: flex;
  height: 172px;
  font-size: 41px;
  color: #ddd;
}
.sector {
  width: 290px;
  display: flex;
  flex-direction: column;
  align-items: center;
  color: #8e8e98;
}
.sector i {
  margin-top: 13px;
  border: 15px solid transparent;
  border-bottom: 18px solid #aaa;
  border-top: 0;
}
.sector span {
  margin-top: 18px;
  line-height: 54px;
}
.sector b {
  margin-top: 15px;
  font-size: 46px;
  line-height: 56px;
  font-weight: 400;
  color: #0f0;
  transform: scaleX(.96);
}
.item {
  flex: 1;
  display: flex;
  flex-direction: column;
  align-items: center;
  padding: 24px 2px 0 0;
  line-height: 72px;
}
.item svg {
  fill: none;
  stroke: #ddd;
  stroke-width: 3.500;
}
.system {
  display: flex;
  justify-content: center;
  gap: 210px;
  padding-top: 50px;
}
.system svg {
  fill: none;
  stroke: #929292;
  stroke-width: 6.500;
  stroke-linecap: round;
  stroke-linejoin: round;
}
</style>
